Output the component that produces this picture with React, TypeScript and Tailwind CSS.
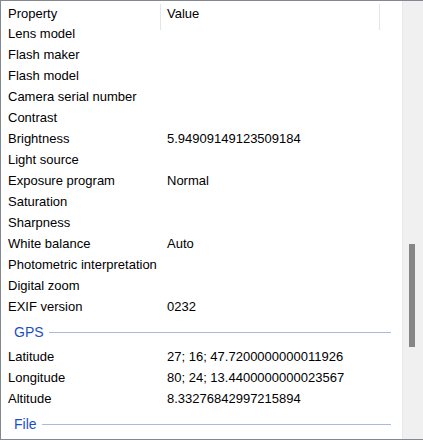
const rows: [string, string][] = [
  ["Lens model", ""],
  ["Flash maker", ""],
  ["Flash model", ""],
  ["Camera serial number", ""],
  ["Contrast", ""],
  ["Brightness", "5.94909149123509184"],
  ["Light source", ""],
  ["Exposure program", "Normal"],
  ["Saturation", ""],
  ["Sharpness", ""],
  ["White balance", "Auto"],
  ["Photometric interpretation", ""],
  ["Digital zoom", ""],
  ["EXIF version", "0232"],
];

const gps: [string, string][] = [
  ["Latitude", "27; 16; 47.7200000000011926"],
  ["Longitude", "80; 24; 13.4400000000023567"],
  ["Altitude", "8.33276842997215894"],
];

function Row({ name, value }: { name: string; value: string }) {
  return (
    <div className="flex h-[21px] items-center leading-[21px]">
      <div className="w-[160px] shrink-0 pl-[7px] whitespace-nowrap">{name}</div>
      <div className="pl-[6px] whitespace-nowrap">{value}</div>
    </div>
  );
}

function Group({ title }: { title: string }) {
  return (
    <div className="flex h-[29px] items-center pl-[13px] pr-[11px] pt-[1px]">
      <span className="text-[14px] text-[#1c4fc4]">{title}</span>
      <div className="ml-[5px] h-px flex-1 bg-[#a7bbe0]" />
    </div>
  );
}

export default function App() {
  return (
    <div
      className="flex h-[440px] w-[423px] overflow-hidden border-t border-l border-b border-[#828790] bg-white text-[13px] text-black"
      style={{ fontFamily: '"Liberation Sans", Arial, sans-serif' }}
    >
      <div className="flex w-[401px] shrink-0 flex-col">
        {/* Header */}
        <div className="flex h-[22px] items-center pt-[3px]">
          <div className="w-[159px] shrink-0 pl-[7px]">Property</div>
          <div className="h-[26px] w-px self-start bg-[#e5e5e5]" />
          <div className="w-[218px] shrink-0 pl-[6px]">Value</div>
          <div className="h-[26px] w-px self-start bg-[#e5e5e5]" />
        </div>

        {rows.map(([n, v]) => (
          <Row key={n} name={n} value={v} />
        ))}

        <Group title="GPS" />
        {gps.map(([n, v]) => (
          <Row key={n} name={n} value={v} />
        ))}
        <Group title="File" />
      </div>

      {/* Scrollbar */}
      <div className="relative flex-1 border-l border-[#e8e8e8] bg-[#f0f0f0]">
        <div className="absolute top-[243px] left-[6px] h-[103px] w-[6px] bg-[#868686]" />
      </div>
    </div>
  );
}
